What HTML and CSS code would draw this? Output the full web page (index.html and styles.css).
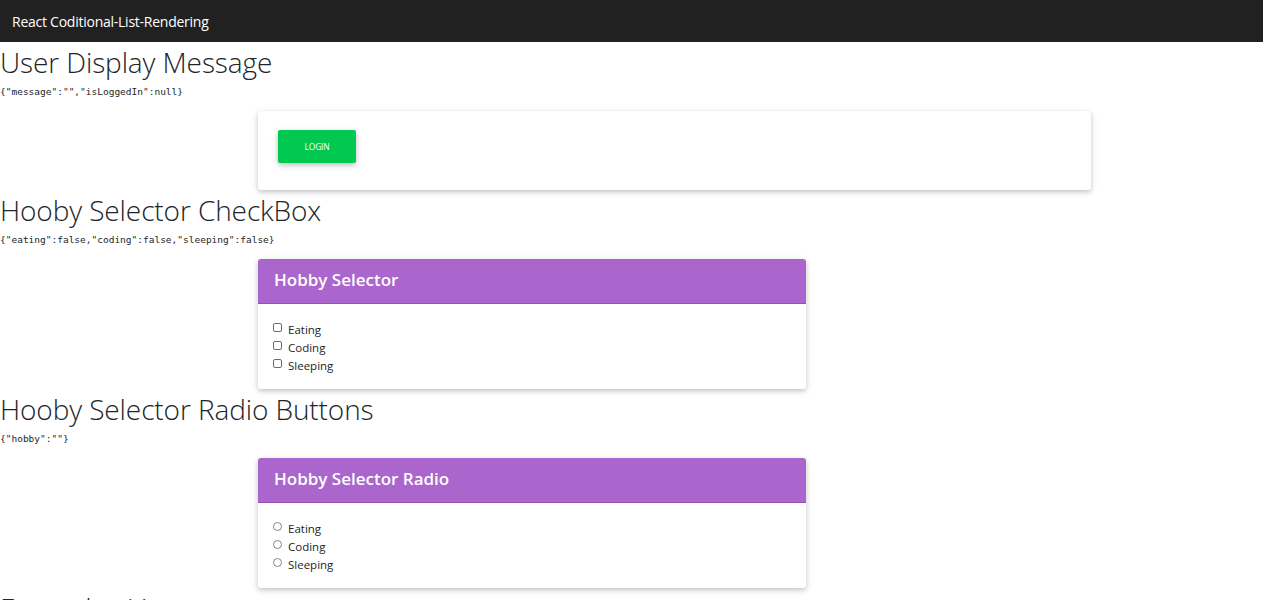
FILE: index.html
```html
<!DOCTYPE html>
<html lang="en">
<head>
<meta charset="utf-8">
<title>React Coditional-List-Rendering</title>
<link rel="stylesheet" href="styles.css">
</head>
<body>
<nav class="navbar"><span class="brand">React Coditional-List-Rendering</span></nav>
<main class="page">
  <section class="section">
    <h1 class="title">User Display Message</h1>
    <pre class="state">{"message":"","isLoggedIn":null}</pre>
    <div class="card card-wide">
      <div class="card-body">
        <button class="btn-login" type="button">Login</button>
      </div>
    </div>
  </section>
  <section class="section">
    <h1 class="title">Hooby Selector CheckBox</h1>
    <pre class="state">{"eating":false,"coding":false,"sleeping":false}</pre>
    <div class="card card-narrow">
      <div class="card-header">Hobby Selector</div>
      <div class="card-list">
        <label class="opt"><input type="checkbox" class="box"><span>Eating</span></label>
        <label class="opt"><input type="checkbox" class="box"><span>Coding</span></label>
        <label class="opt"><input type="checkbox" class="box"><span>Sleeping</span></label>
      </div>
    </div>
  </section>
  <section class="section">
    <h1 class="title">Hooby Selector Radio Buttons</h1>
    <pre class="state">{"hobby":""}</pre>
    <div class="card card-narrow">
      <div class="card-header">Hobby Selector Radio</div>
      <div class="card-list">
        <label class="opt"><input type="radio" name="hobby" class="radio"><span>Eating</span></label>
        <label class="opt"><input type="radio" name="hobby" class="radio"><span>Coding</span></label>
        <label class="opt"><input type="radio" name="hobby" class="radio"><span>Sleeping</span></label>
      </div>
    </div>
  </section>
  <section class="section">
    <h1 class="title">Examples List</h1>
  </section>
</main>
</body>
</html>
```

FILE: styles.css
```css
html, body {
  margin: 0;
  padding: 0;
  background: #ffffff;
}

body {
  font-family: "Open Sans", "Segoe UI", Arial, sans-serif;
  color: #212529;
}

.navbar {
  height: 42px;
  background: #212121;
  display: flex;
  align-items: center;
  padding-left: 12px;
}

.brand {
  color: #ffffff;
  font-size: 14px;
  font-family: "Open Sans", sans-serif;
  letter-spacing: -0.25px;
}

.title {
  margin: 0;
  font-family: "Open Sans", sans-serif;
  font-weight: 300;
  font-size: 28px;
  line-height: 40px;
  letter-spacing: -0.1px;
  color: #212529;
}

.state {
  margin: 4px 0 13px;
  font-family: "DejaVu Sans Mono", "Liberation Mono", monospace;
  font-size: 9.5px;
  line-height: 12px;
  color: #212529;
}

.card {
  margin-left: 258px;
  background: #ffffff;
  border-radius: 3px;
  box-shadow: 0 2px 4px 0 rgba(0, 0, 0, 0.16), 0 2px 8px 0 rgba(0, 0, 0, 0.10);
  overflow: hidden;
}

.card-wide {
  width: 833px;
}

.card-narrow {
  width: 548px;
}

.card-body {
  padding: 19px 20px 27px;
  display: flex;
}

.btn-login {
  width: 78px;
  height: 33px;
  border: 0;
  border-radius: 2px;
  background: #00c851;
  color: #ffffff;
  font-family: "Open Sans", sans-serif;
  font-size: 8.5px;
  font-weight: 500;
  text-transform: uppercase;
  letter-spacing: -0.2px;
  box-shadow: 0 2px 4px 0 rgba(0, 0, 0, 0.16), 0 2px 8px 0 rgba(0, 0, 0, 0.12);
  padding: 0;
}

.card-header {
  height: 44px;
  box-sizing: border-box;
  height: 45px;
  background: #aa66cc;
  border-bottom: 1px solid #9254b0;
  color: #ffffff;
  font-family: "Open Sans", sans-serif;
  font-weight: 600;
  font-size: 17px;
  letter-spacing: 0;
  display: flex;
  align-items: center;
  padding: 0 0 4px 16px;
}

.card-list {
  padding: 16px 15px 15px;
  display: flex;
  flex-direction: column;
}

.opt {
  height: 18px;
  display: flex;
  align-items: center;
  gap: 6px;
  font-family: "Open Sans", sans-serif;
  font-size: 11.5px;
  color: #212529;
}

.box,
.radio {
  appearance: none;
  -webkit-appearance: none;
  margin: -4px 0 0 0;
  width: 9px;
  height: 9px;
  border: 1px solid #6b6b6b;
  background: #ffffff;
  box-sizing: border-box;
}

.box {
  border-radius: 2px;
}

.radio {
  border-radius: 50%;
  border-color: #858585;
}
```
